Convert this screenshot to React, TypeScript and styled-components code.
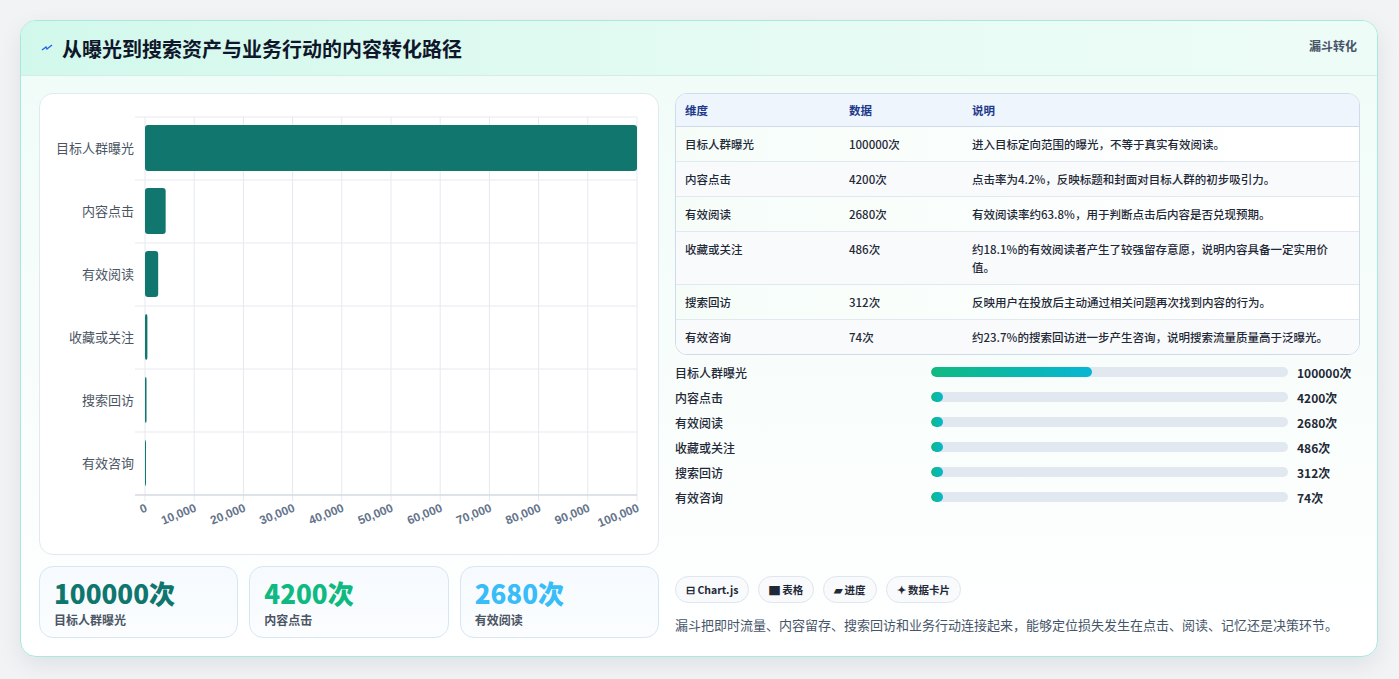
import React from "react";
import styled, { createGlobalStyle } from "styled-components";

const Global = createGlobalStyle`
  html, body { margin: 0; padding: 0; background: #f1f3f5; }
  body { font-family: "Noto Sans CJK SC", "Noto Sans", sans-serif; color: #1e293b; }
`;

const funnel = [
  { name: "目标人群曝光", value: 100000, note: "进入目标定向范围的曝光，不等于真实有效阅读。" },
  { name: "内容点击", value: 4200, note: "点击率为4.2%，反映标题和封面对目标人群的初步吸引力。" },
  { name: "有效阅读", value: 2680, note: "有效阅读率约63.8%，用于判断点击后内容是否兑现预期。" },
  { name: "收藏或关注", value: 486, note: "约18.1%的有效阅读者产生了较强留存意愿，说明内容具备一定实用价值。" },
  { name: "搜索回访", value: 312, note: "反映用户在投放后主动通过相关问题再次找到内容的行为。" },
  { name: "有效咨询", value: 74, note: "约23.7%的搜索回访进一步产生咨询，说明搜索流量质量高于泛曝光。" },
];

const Page = styled.div`
  padding: 20px 21px 22px 20px;
`;

const Card = styled.div`
  border: 1px solid #a7eadc;
  border-radius: 16px;
  background: linear-gradient(180deg, #effcf7 0%, #f7fdfb 50%, #ffffff 100%);
  box-shadow: 0 8px 24px rgba(15, 23, 42, 0.08);
  overflow: hidden;
`;

const Header = styled.div`
  height: 54px;
  display: flex;
  align-items: center;
  justify-content: space-between;
  padding: 0 20px 0 20px;
  background: linear-gradient(90deg, #d2f8ec 0%, #e6fbf4 60%, #eefcf7 100%);
  border-bottom: 1px solid #d3ece6;
`;

const Title = styled.h1`
  margin: 0;
  font-size: 20px;
  font-weight: 700;
  color: #0f172a;
  display: flex;
  align-items: center;
  gap: 9px;
`;

const Tag = styled.span`
  font-size: 12px;
  font-weight: 700;
  color: #475569;
  align-self: flex-start;
  margin-top: 16px;
`;

const Body = styled.div`
  display: grid;
  grid-template-columns: 620px 685px;
  gap: 16px;
  padding: 17px 18px 18px 18px;
`;

const Left = styled.div`
  display: flex;
  flex-direction: column;
  gap: 11px;
`;

const Panel = styled.div`
  height: 460px;
  background: #fff;
  border: 1px solid #dfe9ef;
  border-radius: 14px;
`;

const Stats = styled.div`
  display: grid;
  grid-template-columns: repeat(3, 1fr);
  gap: 11px;
`;

const Stat = styled.div`
  height: 72px;
  box-sizing: border-box;
  padding: 10px 14px;
  border: 1px solid #d7e6f3;
  border-radius: 14px;
  background: linear-gradient(180deg, #f6fafe 0%, #fbfdff 100%);
`;

const StatValue = styled.div<{ $c: string }>`
  font-size: 26px;
  font-weight: 800;
  line-height: 32px;
  color: ${(p) => p.$c};
`;

const StatLabel = styled.div`
  font-size: 12px;
  font-weight: 600;
  color: #4b5563;
  margin-top: 2px;
`;

const Right = styled.div`
  display: flex;
  flex-direction: column;
`;

const Table = styled.table`
  width: 100%;
  border-collapse: separate;
  border-spacing: 0;
  border: 1px solid #cfdbe8;
  border-radius: 12px;
  overflow: hidden;
  font-size: 11.5px;
  background: #fff;
`;

const Th = styled.th`
  text-align: left;
  font-weight: 700;
  color: #1e3a8a;
  background: #eef5fd;
  height: 32px;
  padding: 0 9px;
  border-bottom: 1px solid #cfdbe8;
`;

const Tr = styled.tr<{ $alt: boolean }>`
  background: ${(p) => (p.$alt ? "#f8fafc" : "linear-gradient(90deg, #f6fdf9, #ffffff)")};
  td { border-bottom: 1px solid #e2e8f0; }
  &:last-child td { border-bottom: none; }
`;

const Td = styled.td<{ $w?: number }>`
  padding: 8px 9px;
  vertical-align: top;
  line-height: 18px;
  color: #1f2937;
  font-weight: 500;
  width: ${(p) => (p.$w ? p.$w + "px" : "auto")};
`;

const Progress = styled.div`
  display: flex;
  flex-direction: column;
  gap: 7px;
  margin-top: 8px;
`;

const PRow = styled.div`
  display: grid;
  grid-template-columns: 256px 357px 1fr;
  align-items: center;
  height: 18px;
  font-size: 12px;
`;

const PLabel = styled.span`
  color: #1f2937;
  font-weight: 500;
`;

const Track = styled.div`
  height: 10px;
  border-radius: 5px;
  background: #e2e8f0;
  overflow: hidden;
`;

const Fill = styled.div`
  height: 100%;
  min-width: 12px;
  border-radius: 5px;
  background: linear-gradient(90deg, #10b981, #06b6d4);
`;

const PValue = styled.span`
  font-weight: 700;
  color: #1f2937;
  padding-left: 9px;
`;

const Chips = styled.div`
  display: flex;
  gap: 9px;
  margin-top: auto;
`;

const Chip = styled.span`
  height: 27px;
  box-sizing: border-box;
  padding: 0 10px;
  display: inline-flex;
  align-items: center;
  gap: 4px;
  border: 1px solid #dfe5ee;
  border-radius: 14px;
  background: #f8fafc;
  font-size: 10.5px;
  font-weight: 600;
  color: #1f2937;
`;

const Note = styled.p`
  margin: 12px 0 4px;
  font-size: 13px;
  color: #475569;
`;

const W = 620;
const px0 = 105;
const px1 = 597;
const py0 = 23;
const band = 63;

function FunnelChart() {
  const ticks = Array.from({ length: 11 }, (_, i) => i * 10000);
  const sx = (v: number) => px0 + ((px1 - px0) * v) / 100000;
  return (
    <svg width={W} height={460} style={{ display: "block" }}>
      {ticks.map((t) => (
        <line key={t} x1={sx(t)} x2={sx(t)} y1={py0} y2={py0 + band * 6 + 6} stroke="#e5e9f0" />
      ))}
      {Array.from({ length: 7 }, (_, i) => (
        <line key={i} x1={px0 - 10} x2={px1} y1={py0 + band * i} y2={py0 + band * i} stroke="#e5e9f0" />
      ))}
      <line x1={px0 - 10} x2={px1} y1={py0 + band * 6} y2={py0 + band * 6} stroke="#cbd2dc" />
      {funnel.map((f, i) => {
        const y = py0 + band * i + 8;
        return (
          <g key={f.name}>
            <rect x={px0} y={y} width={Math.max(sx(f.value) - px0, 1)} height={46} rx={3} fill="#11766e" />
            <text x={94} y={y + 28} textAnchor="end" fontSize={13} fill="#4b5563">
              {f.name}
            </text>
          </g>
        );
      })}
      {ticks.map((t) => (
        <text
          key={t}
          x={sx(t) + 3}
          y={py0 + band * 6 + 16}
          textAnchor="end"
          fontSize={12}
          fontWeight={700}
          fontFamily="Liberation Sans, sans-serif"
          fill="#64748b"
          transform={`rotate(-22 ${sx(t) + 3} ${py0 + band * 6 + 16})`}
        >
          {t.toLocaleString("en-US")}
        </text>
      ))}
    </svg>
  );
}

export default function App() {
  return (
    <Page>
      <Global />
      <Card>
        <Header>
          <Title>
            <svg width="12" height="10" viewBox="0 0 12 10">
              <path d="M1 7 L5 4 L6 6 L11 2" stroke="#2563eb" strokeWidth="1.4" fill="none" />
            </svg>
            从曝光到搜索资产与业务行动的内容转化路径
          </Title>
          <Tag>漏斗转化</Tag>
        </Header>
        <Body>
          <Left>
            <Panel>
              <FunnelChart />
            </Panel>
            <Stats>
              <Stat>
                <StatValue $c="#0f766e">100000次</StatValue>
                <StatLabel>目标人群曝光</StatLabel>
              </Stat>
              <Stat>
                <StatValue $c="#10b981">4200次</StatValue>
                <StatLabel>内容点击</StatLabel>
              </Stat>
              <Stat>
                <StatValue $c="#38bdf8">2680次</StatValue>
                <StatLabel>有效阅读</StatLabel>
              </Stat>
            </Stats>
          </Left>
          <Right>
            <Table>
              <thead>
                <tr>
                  <Th>维度</Th>
                  <Th>数据</Th>
                  <Th>说明</Th>
                </tr>
              </thead>
              <tbody>
                {funnel.map((f, i) => (
                  <Tr key={f.name} $alt={i % 2 === 1}>
                    <Td $w={146}>{f.name}</Td>
                    <Td $w={105}>{f.value}次</Td>
                    <Td>{f.note}</Td>
                  </Tr>
                ))}
              </tbody>
            </Table>
            <Progress>
              {funnel.map((f, i) => (
                <PRow key={f.name}>
                  <PLabel>{f.name}</PLabel>
                  <Track>
                    <Fill style={{ width: i === 0 ? "45%" : `${(f.value / 100000) * 45}%` }} />
                  </Track>
                  <PValue>{f.value}次</PValue>
                </PRow>
              ))}
            </Progress>
            <Chips>
              <Chip>⊟ Chart.js</Chip>
              <Chip>▇ 表格</Chip>
              <Chip>▰ 进度</Chip>
              <Chip>✦ 数据卡片</Chip>
            </Chips>
            <Note>漏斗把即时流量、内容留存、搜索回访和业务行动连接起来，能够定位损失发生在点击、阅读、记忆还是决策环节。</Note>
          </Right>
        </Body>
      </Card>
    </Page>
  );
}
